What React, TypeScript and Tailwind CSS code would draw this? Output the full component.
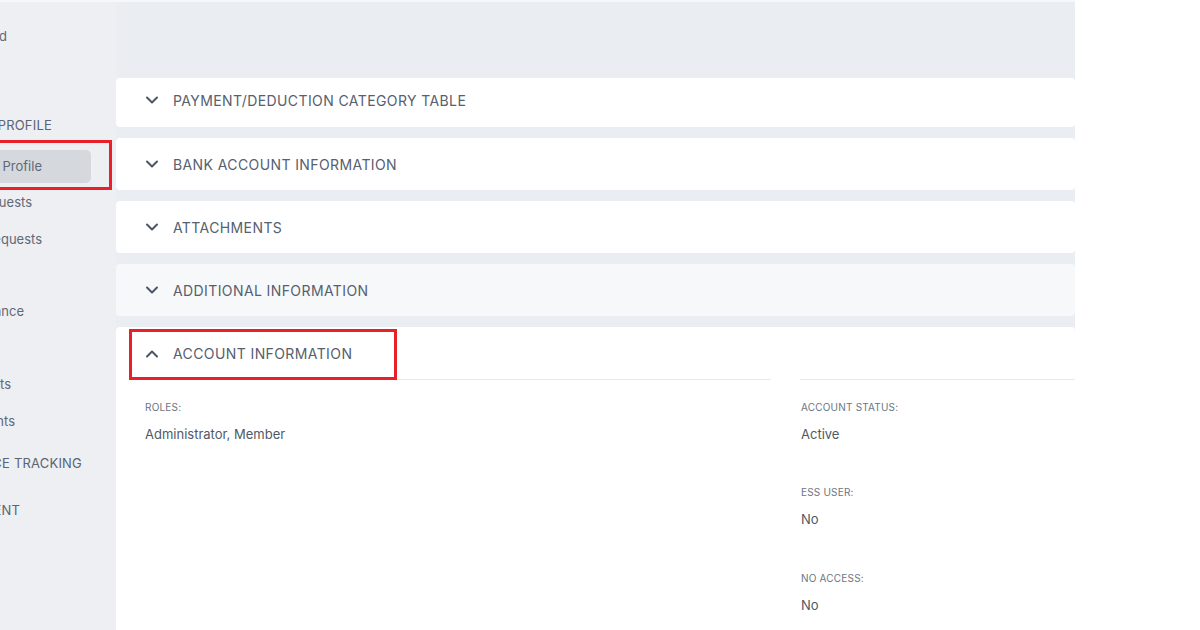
import React from "react";

const font = { fontFamily: "Inter, 'Noto Sans', sans-serif" };

function Chevron({ up = false }: { up?: boolean }) {
  return (
    <svg width="14" height="9" viewBox="0 0 14 9" className="shrink-0">
      <path
        d={up ? "M2 7.5 L7 2.5 L12 7.5" : "M2 1.5 L7 6.5 L12 1.5"}
        fill="none"
        stroke="#4b5563"
        strokeWidth="2"
        strokeLinecap="round"
        strokeLinejoin="round"
      />
    </svg>
  );
}

function SideRow({ text, end, mt, heading = false }: { text: string; end: number; mt: string; heading?: boolean }) {
  return (
    <div className={`${mt} h-[26px] flex items-center`}>
      <div
        className={`flex justify-end whitespace-nowrap ${heading ? "text-[13px] text-[#5a6472] tracking-[0.2px]" : "text-[13px] text-[#5f6977]"}`}
        style={{ width: end }}
      >
        <span>{text}</span>
      </div>
    </div>
  );
}

function Section({ title, h, light = false, extra = "" }: { title: string; h: string; light?: boolean; extra?: string }) {
  return (
    <div className={`${h} ${extra} rounded-[4px] ${light ? "bg-[#f7f8fa]" : "bg-white"} flex items-center pl-[29px] gap-[14px]`}>
      <Chevron />
      <span className="text-[14px] text-[#56606e] tracking-[0.4px] whitespace-nowrap">{title}</span>
    </div>
  );
}

function Field({ label, value, mt }: { label: string; value: string; mt: string }) {
  return (
    <div className={`${mt} flex flex-col`}>
      <div className="h-[16px] flex items-center text-[10px] text-[#6b7584] tracking-[0.2px] whitespace-nowrap">{label}</div>
      <div className="mt-[10px] h-[20px] flex items-center text-[13px] text-[#4f5966] whitespace-nowrap">{value}</div>
    </div>
  );
}

export default function App() {
  return (
    <div className="w-[1200px] h-[630px] overflow-hidden bg-white flex flex-col" style={font}>
      <div className="w-[1075px] h-[2px] bg-[#f6f7f9] shrink-0" />
      <div className="flex flex-1 min-h-0">
        {/* Sidebar */}
        <div className="w-[116px] shrink-0 bg-[#edeff2] overflow-hidden flex flex-col">
          <SideRow text="Dashboard" end={7} mt="mt-[22px]" />
          <SideRow text="MY PROFILE" end={52} mt="mt-[63px]" heading />
          <div className="mt-[1px] h-[50px] w-[112px] border-[3px] border-l-0 border-[#e8202a] flex flex-col">
            <div className="mt-[7px] h-[33px] w-[91px] bg-[#d5d9de] rounded-r-[5px] flex items-center">
              <div className="flex justify-end whitespace-nowrap text-[13px] text-[#5f6977]" style={{ width: 42 }}>
                <span>My Profile</span>
              </div>
            </div>
          </div>
          <SideRow text="Leave Requests" end={32} mt="mt-0" />
          <SideRow text="Overtime Requests" end={42} mt="mt-[11px]" />
          <SideRow text="Attendance" end={24} mt="mt-[46px]" />
          <SideRow text="Payments" end={11} mt="mt-[47px]" />
          <SideRow text="Documents" end={15} mt="mt-[11px]" />
          <SideRow text="PERFORMANCE TRACKING" end={82} mt="mt-[16px]" heading />
          <SideRow text="RECRUITMENT" end={20} mt="mt-[21px]" heading />
        </div>

        {/* Main */}
        <div className="w-[959px] shrink-0 bg-[#eaedf1] overflow-hidden flex flex-col pt-[76px] gap-[11px]">
          <Section title="PAYMENT/DEDUCTION CATEGORY TABLE" h="h-[49px]" extra="pb-[4px]" />
          <Section title="BANK ACCOUNT INFORMATION" h="h-[52px]" />
          <Section title="ATTACHMENTS" h="h-[52px]" />
          <Section title="ADDITIONAL INFORMATION" h="h-[52px]" light />
          <div className="flex-1 rounded-t-[4px] bg-white pl-[13px] flex gap-[29px]">
            <div className="w-[642px] shrink-0 flex flex-col">
              <div className="h-[53px] border-b border-[#e6e8eb] flex items-end">
                <div className="w-[268px] h-[51px] border-[3px] border-[#e8202a] flex items-center pl-[13px] gap-[14px] pb-[2px] -mb-[1px]">
                  <Chevron up />
                  <span className="text-[14px] text-[#56606e] tracking-[0.4px] whitespace-nowrap">ACCOUNT INFORMATION</span>
                </div>
              </div>
              <div className="pl-[16px]">
                <Field label="ROLES:" value="Administrator, Member" mt="mt-[19px]" />
              </div>
            </div>
            <div className="w-[642px] shrink-0 flex flex-col">
              <div className="h-[53px] border-b border-[#e6e8eb]" />
              <div className="pl-[1px] flex flex-col">
                <Field label="ACCOUNT STATUS:" value="Active" mt="mt-[19px]" />
                <Field label="ESS USER:" value="No" mt="mt-[39px]" />
                <Field label="NO ACCESS:" value="No" mt="mt-[40px]" />
              </div>
            </div>
          </div>
        </div>
      </div>
    </div>
  );
}
